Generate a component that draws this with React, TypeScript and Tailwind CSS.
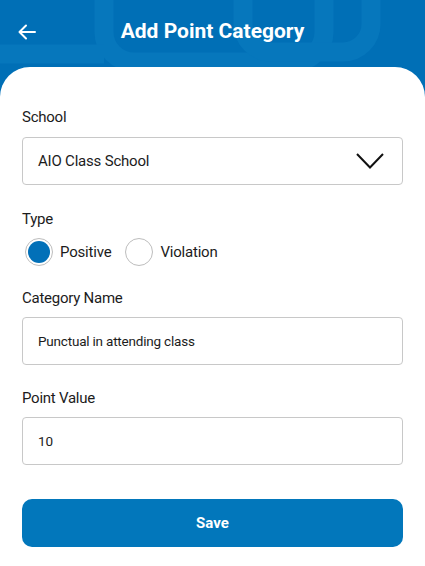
import React from "react";

// Add Point Category form: blue patterned header, rounded white sheet with fields.
function HeaderPattern() {
  return (
    <svg className="absolute left-0 top-0 h-[90px] w-[425px]" viewBox="0 0 425 90" fill="none">
      <g stroke="#0677bc" strokeWidth="19">
        <rect x="104" y="-40" width="220" height="102" rx="30" />
        <rect x="243" y="-40" width="128" height="92" rx="28" />
        <path d="M-10 54 H104" />
      </g>
    </svg>
  );
}

function Label({ children }: { children: React.ReactNode }) {
  return <div className="text-[15px] leading-5 tracking-[-0.25px] text-[#1c1c1c]">{children}</div>;
}

function Radio({ checked, label }: { checked?: boolean; label: string }) {
  return (
    <div className="flex items-center gap-[7px]">
      <span className="flex h-[28px] w-[28px] items-center justify-center rounded-full border border-[#bdbdbd] bg-white">
        {checked && <span className="h-[22px] w-[22px] rounded-full bg-[#0270b8]" />}
      </span>
      <span className="text-[15px] tracking-[-0.2px] text-[#1c1c1c]">{label}</span>
    </div>
  );
}

export default function App() {
  return (
    <div className="relative h-[566px] w-[425px] overflow-hidden bg-[#006fb6] font-['Roboto',sans-serif]">
      <HeaderPattern />
      <div className="relative flex h-[67px] items-center px-[17px] pb-[4px]">
        <svg width="20" height="20" viewBox="0 0 20 20" fill="none" stroke="white" strokeWidth="2" strokeLinecap="round" strokeLinejoin="round">
          <path d="M18 10 H2.5 M9 3.5 L2.5 10 L9 16.5" />
        </svg>
        <h1 className="absolute inset-x-0 top-[17px] text-center text-[21px] font-bold leading-7 text-white">
          Add Point Category
        </h1>
      </div>
      <div className="relative h-full rounded-t-[30px] bg-white px-[22px] pt-[40px]">
        <Label>School</Label>
        <div className="mt-[10px] flex h-[48px] items-center justify-between rounded-[4px] border border-[#c8c8c8] pl-[15px] pr-[18px]">
          <span className="text-[15px] tracking-[-0.2px] text-[#1c1c1c]">AIO Class School</span>
          <svg width="28" height="16" viewBox="0 0 28 16" fill="none" stroke="#111" strokeWidth="2">
            <path d="M1 1 L14 14.5 L27 1" />
          </svg>
        </div>

        <div className="mt-[24px]">
          <Label>Type</Label>
        </div>
        <div className="mt-[9px] flex items-center gap-[14px] pl-[3px]">
          <Radio checked label="Positive" />
          <Radio label="Violation" />
        </div>

        <div className="mt-[22px]">
          <Label>Category Name</Label>
        </div>
        <div className="mt-[9px] flex h-[48px] items-center rounded-[4px] border border-[#c8c8c8] px-[15px]">
          <span className="text-[13.5px] tracking-[-0.2px] text-[#1c1c1c]">Punctual in attending class</span>
        </div>

        <div className="mt-[23px]">
          <Label>Point Value</Label>
        </div>
        <div className="mt-[9px] flex h-[48px] items-center rounded-[4px] border border-[#c8c8c8] px-[15px]">
          <span className="text-[13.5px] text-[#1c1c1c]">10</span>
        </div>

        <button className="mt-[34px] flex h-[48px] w-full items-center justify-center rounded-[10px] bg-[#0277bb] text-[15px] font-bold text-white">
          Save
        </button>
      </div>
    </div>
  );
}
